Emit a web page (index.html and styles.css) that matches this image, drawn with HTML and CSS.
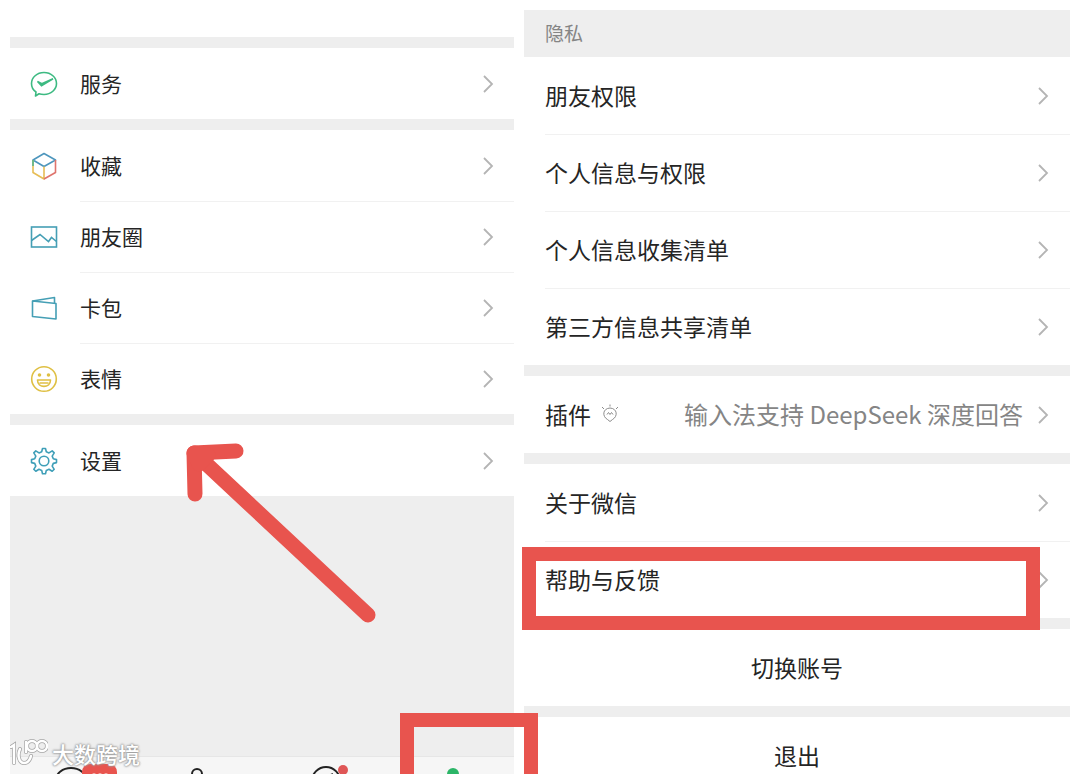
FILE: index.html
```
<!DOCTYPE html>
<html lang="zh-CN">
<head>
  <meta charset="UTF-8" />
  <meta name="viewport" content="width=device-width, initial-scale=1.0"/>
  <title>微信设置</title>
  <link rel="stylesheet" href="styles.css">
</head>
<body>
  <svg class="defs" aria-hidden="true">
    <symbol id="chevron" viewBox="0 0 12 20">
      <path d="M2 2 L10 10 L2 18" fill="none" stroke="#b4b4b4" stroke-width="1.8"/>
    </symbol>
  </svg>

  <main class="page">
    <section class="panel me">
      <div class="top-space"></div>
      <nav class="group">
        <a class="row" href="#">
          <svg class="icon" viewBox="0 0 28 28" fill="none" stroke="#3dba82" stroke-width="1.6">
            <path d="M5.500 26 L6 22 C3 20 1.500 17 1.500 13.500 C1.500 7.500 7 2.500 14 2.500 S26.500 7.500 26.500 13.500 S21 24.500 14 24.500 C12 24.500 10.500 24.300 9 23.800 Z" stroke-linejoin="round"/>
            <path d="M7.500 11.500 L11.500 15.800 L23 8.800 L11.800 13.800 Z" fill="#2fa873"/>
          </svg>
          <span class="label">服务</span>
          <svg class="chevron"><use href="#chevron"/></svg>
        </a>
      </nav>
      <nav class="group">
        <a class="row" href="#">
          <svg class="icon" viewBox="0 0 28 28" fill="none" stroke-width="1.6" stroke-linejoin="round">
            <path d="M3 8 L14 1.500 L25.500 8 L14 14.500 Z" stroke="#4d96bd"/>
            <path d="M3 8 V20.500 L14 27 V14.500" stroke="#e7bd55"/>
            <path d="M25.500 8 V20.500 L14 27" stroke="#df746d"/>
            <path d="M3 8 V14" stroke="#55b68c"/>
          </svg>
          <span class="label">收藏</span>
          <svg class="chevron"><use href="#chevron"/></svg>
        </a>
        <a class="row" href="#">
          <svg class="icon" viewBox="0 0 28 28" fill="none" stroke="#459fb5" stroke-width="1.6">
            <rect x="1.500" y="4" width="25" height="20"/>
            <path d="M1.500 17.500 L10 11.500 L18.500 18.500 L21.500 14.500 L26.500 18.500"/>
          </svg>
          <span class="label">朋友圈</span>
          <svg class="chevron"><use href="#chevron"/></svg>
        </a>
        <a class="row" href="#">
          <svg class="icon" viewBox="0 0 28 28" fill="none" stroke="#459fb5" stroke-width="1.6" stroke-linejoin="round">
            <path d="M2.500 7 L26 9.500 V25 L2.500 22.500 Z"/>
            <path d="M2.500 7 L24.500 3.500 V9"/>
          </svg>
          <span class="label">卡包</span>
          <svg class="chevron"><use href="#chevron"/></svg>
        </a>
        <a class="row" href="#">
          <svg class="icon" viewBox="0 0 28 28" fill="none" stroke="#dfc044" stroke-width="1.6">
            <circle cx="14" cy="14" r="12.300"/>
            <circle cx="9.500" cy="10" r="1" fill="#dfc044"/>
            <circle cx="18.500" cy="10" r="1" fill="#dfc044"/>
            <path d="M7.500 15 H20.500 C20.500 23.500 7.500 23.500 7.500 15 Z M9.500 18 H18.500" stroke-linejoin="round"/>
          </svg>
          <span class="label">表情</span>
          <svg class="chevron"><use href="#chevron"/></svg>
        </a>
      </nav>
      <nav class="group">
        <a class="row" href="#">
          <svg class="icon" viewBox="0 0 28 28" fill="none" stroke="#3f9fb8" stroke-width="1.6" stroke-linejoin="round">
            <path d="M12.500 1.500 h3 l.8 3.300 2.700 1.100 3.200 -2 2 2 -2 3.200 1.100 2.700 3.200 .8 v3 l-3.200 .8 -1.100 2.700 2 3.200 -2 2 -3.200 -2 -2.700 1.100 -.8 3.300 h-3 l-.8 -3.300 -2.700 -1.100 -3.200 2 -2 -2 2 -3.200 -1.100 -2.700 -3.200 -.8 v-3 l3.200 -.8 1.100 -2.700 -2 -3.200 2 -2 3.200 2 2.700 -1.100 Z"/>
            <circle cx="14" cy="14" r="4.800"/>
          </svg>
          <span class="label">设置</span>
          <svg class="chevron"><use href="#chevron"/></svg>
        </a>
      </nav>
      <div class="filler"></div>

      <nav class="tabs">
        <a class="tab" href="#" aria-label="微信">
          <svg viewBox="0 0 100 40" fill="none">
            <ellipse cx="48" cy="23" rx="15" ry="12" stroke="#222" stroke-width="2"/>
            <rect x="59" y="7" width="35" height="24" rx="8" fill="#e8544e"/>
            <g fill="#f6b3ae"><circle cx="71" cy="18" r="2"/><circle cx="77" cy="18" r="2"/><circle cx="83" cy="18" r="2"/></g>
          </svg>
        </a>
        <a class="tab" href="#" aria-label="通讯录">
          <svg viewBox="0 0 100 40" fill="none" stroke="#222" stroke-width="2">
            <circle cx="48" cy="17" r="5"/>
            <path d="M34 35 C34 28 42 25 48 24 C55 25 62 28 62 35"/>
          </svg>
        </a>
        <a class="tab" href="#" aria-label="发现">
          <svg viewBox="0 0 100 40" fill="none">
            <circle cx="51" cy="24" r="14" stroke="#222" stroke-width="2"/>
            <path d="M58 17 L49 21 L46 30" stroke="#222" stroke-width="2"/>
            <circle cx="68" cy="13" r="5" fill="#df5656"/>
          </svg>
        </a>
        <a class="tab active" href="#" aria-label="我">
          <svg viewBox="0 0 100 40" fill="#2bb567">
            <circle cx="52" cy="17" r="6"/>
            <path d="M38 38 C38 30 46 26 52 25 C59 26 66 30 66 38 Z"/>
          </svg>
          <span class="mark mark-tab"></span>
        </a>
      </nav>

      <!-- arrow pointing at 设置 -->
      <svg class="arrow" viewBox="0 0 192 184" fill="none" stroke="#e8544e" stroke-linecap="round" stroke-linejoin="round" stroke-width="15">
        <path d="M50 9 L8 11 L9 52"/>
        <path d="M14 16 L182 173"/>
        <path d="M8 11 L22 13 L13 22 Z" fill="#e8544e"/>
      </svg>

      <div class="watermark">
        <svg viewBox="0 0 38 28" fill="none" stroke-linecap="round">
          <g stroke="#a5a5a5" stroke-width="4">
            <path d="M1 8 L4 6 V24 M10 10 C7 16 9 24 14 24 C18 24 20 21 21 17"/>
            <path d="M16 3 V13"/><circle cx="22" cy="7" r="5"/><circle cx="32" cy="7" r="5"/>
          </g>
          <g stroke="#fff" stroke-width="2.5">
            <path d="M1 8 L4 6 V24 M10 10 C7 16 9 24 14 24 C18 24 20 21 21 17"/>
            <path d="M16 3 V13"/><circle cx="22" cy="7" r="5"/><circle cx="32" cy="7" r="5"/>
          </g>
        </svg>
        <span>大数跨境</span>
      </div>
    </section>

    <section class="panel settings">
      <h2 class="title">隐私</h2>
      <nav class="group">
        <a class="row" href="#">
          <span class="label">朋友权限</span>
          <svg class="chevron"><use href="#chevron"/></svg>
        </a>
        <a class="row" href="#">
          <span class="label">个人信息与权限</span>
          <svg class="chevron"><use href="#chevron"/></svg>
        </a>
        <a class="row" href="#">
          <span class="label">个人信息收集清单</span>
          <svg class="chevron"><use href="#chevron"/></svg>
        </a>
        <a class="row" href="#">
          <span class="label">第三方信息共享清单</span>
          <svg class="chevron"><use href="#chevron"/></svg>
        </a>
      </nav>
      <nav class="group">
        <a class="row" href="#">
          <span class="label">插件
            <svg class="bulb" viewBox="0 0 18 20" fill="none" stroke="#8c8c8c" stroke-width="1">
              <path d="M6.500 15.500 C1 12.500 1.500 4.500 9 4 C16.500 4.500 17 12.500 11.500 15.500 L9 17.500 Z M9 2.500 V0.500 M3 5 L1 3 M15 5 L17 3 M6 10.500 L7.500 8.500 L9 10.500 L10.500 8.500 L12 10.500"/>
            </svg>
          </span>
          <span class="value">输入法支持 DeepSeek 深度回答</span>
          <svg class="chevron"><use href="#chevron"/></svg>
        </a>
      </nav>
      <nav class="group">
        <a class="row" href="#">
          <span class="label">关于微信</span>
          <svg class="chevron"><use href="#chevron"/></svg>
        </a>
        <a class="row" href="#">
          <span class="label">帮助与反馈</span>
          <svg class="chevron"><use href="#chevron"/></svg>
          <span class="mark mark-row"></span>
        </a>
      </nav>
      <div class="group">
        <button class="row action">切换账号</button>
      </div>
      <div class="group">
        <button class="row action">退出</button>
      </div>
    </section>
  </main>
</body>
</html>
```

FILE: styles.css
```
* {
  box-sizing: border-box;
}
body {
  margin: 0;
  background: #fff;
  color: #252525;
  font-family: "Noto Sans CJK SC", sans-serif;
}
.defs {
  display: none;
}
.page {
  display: grid;
  grid-template-columns: 12fr 13fr;
  gap: 10px;
  height: 100vh;
  padding: 10px 10px 0;
  overflow: hidden;
}
.panel {
  position: relative;
  display: flex;
  flex-direction: column;
  min-width: 0;
  min-height: 0;
}
.group {
  border-top: 11px solid #eee;
}
.title + .group {
  border-top: none;
}
.row {
  position: relative;
  display: flex;
  align-items: center;
  width: 100%;
  padding: 0 20px;
  color: inherit;
  text-decoration: none;
  white-space: nowrap;
}
.row + .row::before {
  content: "";
  position: absolute;
  top: 0;
  right: 0;
  height: 1px;
  background: #f1f1f1;
}
.label {
  padding-bottom: 2px;
}
.chevron {
  flex: none;
  width: 12px;
  height: 20px;
  margin-left: auto;
}

/* left screen */
.top-space {
  height: 27px;
}
.me .row {
  height: 71px;
  font-size: 21px;
}
.me .row::before {
  left: 70px;
}
.icon {
  width: 28px;
  height: 28px;
  margin-right: 22px;
}
.filler {
  flex: 1;
  background: #eee;
}
.tabs {
  display: grid;
  grid-template-columns: repeat(4, 1fr);
  height: 18px;
  background: #f6f6f6;
  border-top: 1px solid #e6e6e6;
}
.tab {
  position: relative;
  display: flex;
  justify-content: center;
}
.tab svg {
  flex: none;
  width: 100px;
  height: 40px;
}
.watermark {
  position: absolute;
  left: 0;
  bottom: 6px;
  display: flex;
  align-items: center;
  gap: 4px;
  color: #fff;
  font-size: 22px;
  font-weight: 500;
  line-height: 30px;
  text-shadow: 0 0 2px #999, 0 0 2px #999, 0 0 3px #aaa;
}
.watermark svg {
  width: 38px;
  height: 28px;
}

/* right screen */
.title {
  flex: none;
  height: 47px;
  margin: 0;
  padding-left: 21px;
  background: #eee;
  color: #858585;
  font-size: 19px;
  font-weight: 400;
  line-height: 45px;
}
.settings .row {
  height: 77px;
  padding: 0 21px;
  font-size: 23px;
}
.settings .row::before {
  left: 21px;
}
.settings .label {
  display: flex;
  align-items: center;
  gap: 10px;
}
.bulb {
  width: 18px;
  height: 20px;
}
.value {
  margin-left: auto;
  padding-bottom: 2px;
  color: #858585;
  font-size: 24px;
}
.value + .chevron {
  margin-left: 14px;
}
.settings .action {
  justify-content: center;
  padding-bottom: 2px;
  border: none;
  background: none;
  color: #252525;
  font-family: inherit;
  cursor: pointer;
}

/* red annotations */
.mark {
  position: absolute;
  z-index: 1;
  border: 14px solid #e8544e;
}
.mark-row {
  top: 6px;
  right: 30px;
  bottom: -12px;
  left: -2px;
}
.mark-tab {
  top: -44px;
  right: -24px;
  left: 12px;
  height: 120px;
}
.arrow {
  position: absolute;
  top: 432px;
  left: 176px;
  width: 192px;
  height: 184px;
}
```
